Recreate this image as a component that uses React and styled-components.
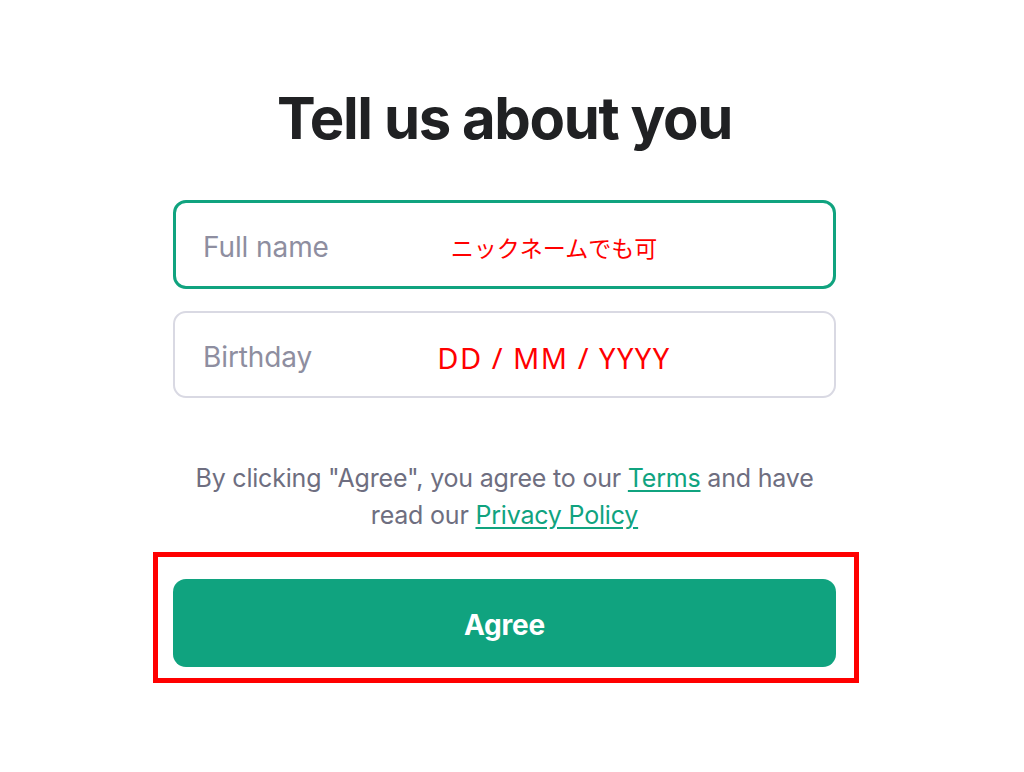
import React from "react";
import styled, { createGlobalStyle } from "styled-components";

const Global = createGlobalStyle`
  html, body { margin: 0; padding: 0; background: #ffffff; }
  body { font-family: Inter, "Noto Sans", sans-serif; }
`;

const Page = styled.main`
  display: flex;
  justify-content: center;
  padding: 0 15px 0 0;
  min-height: 772px;
  box-sizing: border-box;
`;

const Column = styled.div`
  width: 663px;
  display: flex;
  flex-direction: column;
  align-items: stretch;
`;

const Title = styled.h1`
  margin: 80px 0 0;
  text-align: center;
  font-family: Inter, sans-serif;
  font-weight: 700;
  font-size: 58px;
  line-height: 76px;
  letter-spacing: -1.4px;
  color: #202123;
`;

const Fields = styled.div`
  margin-top: 44px;
  display: flex;
  flex-direction: column;
  gap: 22px;
`;

const Field = styled.div`
  height: ${(p) => (p.$active ? "89px" : "87px")};
  box-sizing: border-box;
  border: ${(p) => (p.$active ? "3px solid #10a37f" : "2px solid #d9d9e3")};
  border-radius: 13px;
  display: flex;
  align-items: center;
  padding-top: 5px;
  padding-left: ${(p) => (p.$active ? "27px" : "28px")};
`;

const Label = styled.span`
  flex: 0 0 231px;
  font-family: Inter, sans-serif;
  font-size: 28px;
  color: #8e8ea0;
  letter-spacing: -0.1px;
`;

const Value = styled.span`
  width: 240px;
  text-align: center;
  color: #ff0000;
  font-family: "Noto Sans", "Noto Sans CJK JP", sans-serif;
  font-size: ${(p) => p.$size || "26px"};
  letter-spacing: ${(p) => p.$spacing || "0"};
  white-space: nowrap;
`;

const Notice = styled.p`
  margin: 62px 0 0;
  text-align: center;
  font-family: Inter, sans-serif;
  font-size: 25px;
  line-height: 37px;
  color: #6e6e80;
  letter-spacing: -0.2px;
`;

const Link = styled.a`
  color: #10a37f;
  text-decoration: underline;
  text-underline-offset: 3px;
`;

const Highlight = styled.div`
  margin: 18px -23px 0 -20px;
  border: 5px solid #ff0000;
  padding: 22px 18px 11px 15px;
`;

const Button = styled.button`
  display: block;
  width: 100%;
  height: 88px;
  border: none;
  border-radius: 13px;
  background: #10a37f;
  color: #ffffff;
  font-family: Inter, sans-serif;
  font-weight: 700;
  font-size: 28px;
  letter-spacing: -0.2px;
  padding-top: 4px;
  cursor: pointer;
`;

export default function App() {
  return (
    <>
      <Global />
      <Page>
        <Column>
          <Title>Tell us about you</Title>
          <Fields>
            <Field $active>
              <Label>Full name</Label>
              <Value $size="23px">ニックネームでも可</Value>
            </Field>
            <Field>
              <Label>Birthday</Label>
              <Value $size="29px" $spacing="1.5px">DD / MM / YYYY</Value>
            </Field>
          </Fields>
          <Notice>
            By clicking "Agree", you agree to our <Link href="#">Terms</Link> and have
            <br />
            read our <Link href="#">Privacy Policy</Link>
          </Notice>
          <Highlight>
            <Button>Agree</Button>
          </Highlight>
        </Column>
      </Page>
    </>
  );
}
